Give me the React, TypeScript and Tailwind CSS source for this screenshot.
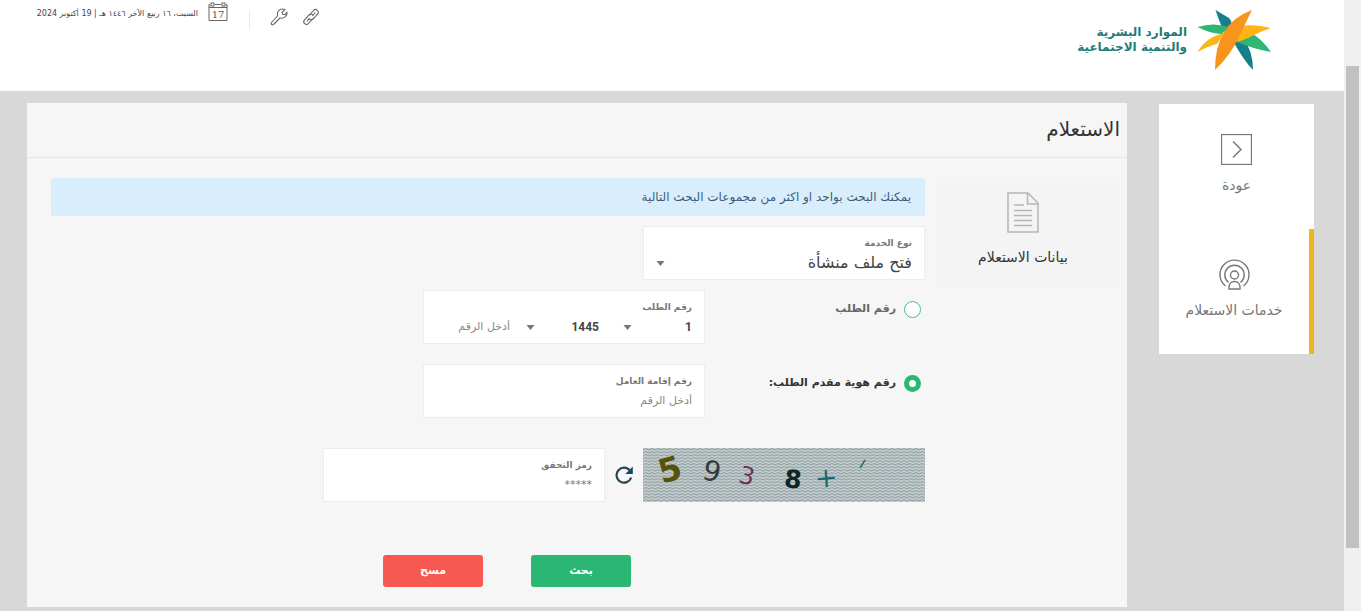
import { useState } from "react"
import type { ReactNode } from "react"

const Caret = () => (
    <svg className="pointer-events-none h-[5px] w-[9px] shrink-0" viewBox="0 0 9 5" aria-hidden="true">
        <path d="M0.500 0h8L4.500 5z" fill="#777" />
    </svg>
)

const Logo = () => (
    <svg className="h-[62px] w-[75px]" viewBox="0 0 75 62" aria-hidden="true">
        <path d="M18.500 1L32 9Q35 12 35 16L28 23Q24 18 18.500 1z" fill="#15808a" />
        <path d="M0.500 18Q17 13 31 18L25 25Q14 25 0.500 18z" fill="#2fb574" />
        <path d="M36 32L46 29Q56 42 56 61Q47 52 36 32z" fill="#15808a" />
        <path d="M38 32L54 24Q64 29 74 43Q56 40 38 32z" fill="#2fb574" />
        <path d="M0.500 43Q9 28 27 24L20 35Q11 37 0.500 43z" fill="#fdb515" />
        <path d="M35 34L44 17Q58 15 74 19Q60 24 51 29Q43 33 35 34z" fill="#fdb515" />
        <path d="M55 1Q36 8 27 23Q18 38 18 61Q33 47 42 28Q47 17 55 1z" fill="#f7941e" />
    </svg>
)

const CalendarIcon = () => (
    <svg className="h-[20px] w-[20px]" viewBox="0 0 20 20" fill="none" stroke="#666" aria-hidden="true">
        <path d="M1 5.500h18M1 4v14.500h18V4" />
        <rect x="3" y="1" width="3" height="3" />
        <rect x="14" y="1" width="3" height="3" />
        <path d="M7 2.500h6M1 4.500v-2h1M19 4.500v-2h-1" />
        <text x="10" y="16" textAnchor="middle" fontSize="10" fontFamily="DejaVu Serif, serif" fill="#555" stroke="none">17</text>
    </svg>
)

const WrenchIcon = () => (
    <svg className="h-[18px] w-[18px]" viewBox="0 0 18 18" fill="none" stroke="#666" strokeWidth="1.100" strokeLinejoin="round" aria-hidden="true">
        <path d="M1.500 14.500L7.500 8C6.500 4 9 1 12.500 1C13.500 1 14.500 1.300 15 1.700L12 4.500L13 6.500L15 6.500L17 4C17.500 8 14 11 10 10L3.500 16.500C2 17.500 0.500 16 1.500 14.500z" />
    </svg>
)

const LinkIcon = () => (
    <svg className="h-[18px] w-[18px]" viewBox="0 0 18 18" fill="none" stroke="#666" strokeWidth="1.100" aria-hidden="true">
        <g transform="rotate(-48 9 9)">
            <path d="M9 11.500H2.500a2.700 2.700 0 0 1 0-5.400H9a2.700 2.700 0 0 1 2.500 3.500" />
            <path d="M9 6.500h6.500a2.700 2.700 0 0 1 0 5.400H9a2.700 2.700 0 0 1-2.500-3.500" />
            <path d="M3 8.800h4M11 9.200h4" />
        </g>
    </svg>
)

const BackIcon = () => (
    <svg className="h-[31px] w-[31px]" viewBox="0 0 31 31" fill="none" stroke="#777" aria-hidden="true">
        <rect x="0.500" y="0.500" width="30" height="30" strokeWidth="1.300" />
        <path d="M12 7.500l8 8l-8 8" strokeWidth="1.500" />
    </svg>
)

const ServicesIcon = () => (
    <svg className="h-[31px] w-[31px]" viewBox="0 0 31 31" fill="none" stroke="#777" strokeWidth="1.400" aria-hidden="true">
        <circle cx="15.500" cy="16" r="4" />
        <path d="M10 30v-2c0-3 2-5.500 5.500-5.500S21 25 21 28v2z" />
        <path d="M9.500 23.500a9.700 9.700 0 1 1 12 0" />
        <path d="M6.500 27a14.500 14.500 0 1 1 18 0" />
    </svg>
)

const DocumentIcon = () => (
    <svg className="h-[41px] w-[32px]" viewBox="0 0 32 41" fill="none" stroke="#b5b5b5" strokeWidth="1.500" aria-hidden="true">
        <path d="M1 1h20l10 10v29H1z" />
        <path d="M20.500 1v11H31" />
        <path d="M7 13h10M7 18.500h18M7 23.500h18M7 28.500h18M7 33.500h18" />
    </svg>
)

const RefreshIcon = () => (
    <svg className="h-[18px] w-[18px]" viewBox="0 0 18 18" fill="none" aria-hidden="true">
        <path d="M15 4.500A7.500 7.500 0 1 0 16.200 11.500" stroke="#2b4754" strokeWidth="2.200" />
        <path d="M17.800 0.500v7.500h-7.500z" fill="#0f4a66" />
    </svg>
)

const Captcha = () => (
    <svg className="h-[54px] w-[282px] max-w-full [direction:ltr]" viewBox="0 0 282 54" role="img" aria-label="رمز التحقق" fontFamily="DejaVu Sans, sans-serif" textAnchor="middle">
        <defs>
            <pattern id="waves" width="6" height="3" patternUnits="userSpaceOnUse">
                <rect width="6" height="3" fill="#c3cccd" />
                <path d="M0 2L3 0.500L6 2" fill="none" stroke="#8b9b9e" />
            </pattern>
        </defs>
        <rect width="282" height="54" fill="url(#waves)" />
        <text x="27" y="33" fontSize="33" fontWeight="bold" fill="#57520a" transform="rotate(-16 27 22)">5</text>
        <text x="69" y="33" fontSize="28" fill="#333940" transform="rotate(14 69 23)">9</text>
        <text x="104" y="36" fontSize="24" fill="#663557" transform="rotate(14 104 27)">3</text>
        <text x="150" y="40" fontSize="25" fontWeight="bold" fill="#0d2726" transform="rotate(6 150 31)">8</text>
        <text x="183" y="39" fontSize="27" fill="#176a72" transform="rotate(-4 183 29)">+</text>
        <path d="M222 12L217 20" stroke="#2d6a58" strokeWidth="1.500" />
    </svg>
)

type FieldProps = { id: string; label: string; children: ReactNode }

const Field = ({ id, label, children }: FieldProps) => (
    <div className="flex h-[54px] w-[282px] max-w-full flex-col border border-[#ececec] bg-white px-3 pt-2">
        <label htmlFor={id} className="text-[9px] leading-4 font-bold text-[#777]">{label}</label>
        {children}
    </div>
)

const App = () => {
    const [tipo, setTipo] = useState("identidad")

    return (
        <div dir="rtl" className="flex min-h-screen bg-[#d8d8d8] font-['DejaVu_Sans',sans-serif] text-[#444]">

            {/* Scroll track */}
            <div className="w-[17px] shrink-0 bg-[#f0f0f0] px-[2px] pt-[66px]">
                <div className="h-[482px] bg-[#c1c1c1]"></div>
            </div>

            <div className="min-w-0 grow">
                <header className="flex h-[91px] items-start justify-between bg-white pr-[72px] pl-[30px]">
                    <a href="#" className="flex items-center gap-[10px] pt-[9px]">
                        <Logo />
                        <span className="text-[12px] leading-[15px] font-bold text-[#1f7d78]">
                            الموارد البشرية<br />والتنمية الاجتماعية
                        </span>
                    </a>
                    <div className="flex items-start pt-[2px]">
                        <a href="#" aria-label="روابط" className="mt-[6px]"><LinkIcon /></a>
                        <a href="#" aria-label="أدوات" className="mt-[6px] mr-[14px]"><WrenchIcon /></a>
                        <div className="mt-2 mr-5 h-5 w-px bg-[#ececec]"></div>
                        <div className="mr-[21px] flex items-end gap-[10px]">
                            <CalendarIcon />
                            <span className="min-w-[168px] text-[8px] leading-4 text-[#444]">السبت، ١٦ ربيع الآخر ١٤٤٦ هـ | 19 أكتوبر 2024</span>
                        </div>
                    </div>
                </header>

                <div className="flex items-start gap-8 pt-3 pr-[30px] pb-1 pl-[27px]">

                    {/* Side menu */}
                    <nav className="mt-px w-[155px] shrink-0 bg-white text-[14px] text-[#777]">
                        <a href="#" className="flex h-[125px] flex-col items-center gap-3 pt-[30px]">
                            <BackIcon />
                            <span className="leading-4">عودة</span>
                        </a>
                        <a href="#" className="flex h-[125px] flex-col items-center gap-3 border-r-[5px] border-[#f0b41c] pt-[30px]">
                            <ServicesIcon />
                            <span className="leading-4">خدمات الاستعلام</span>
                        </a>
                    </nav>

                    <main className="min-w-0 grow bg-[#f6f6f6]">
                        <h1 className="border-b border-[#e6e6e6] px-[7px] pt-3 pb-[14px] text-[20px] leading-7 text-[#333]">الاستعلام</h1>

                        <div className="flex items-start gap-[11px] pt-5 pr-[7px] pb-5 pl-6">
                            <section className="flex h-[110px] w-[184px] shrink-0 flex-col items-center gap-3 bg-[#f4f4f4] pt-[14px] pr-[10px]">
                                <DocumentIcon />
                                <h2 className="text-[14px] leading-6 text-[#333]">بيانات الاستعلام</h2>
                            </section>

                            <form className="min-w-0 grow" onSubmit={(e) => e.preventDefault()}>
                                <p className="rounded-xs bg-[#d9eefc] px-[14px] py-2 text-[12px] leading-[22px] text-[#3d5c78]">
                                    يمكنك البحث بواحد او اكثر من مجموعات البحث التالية
                                </p>

                                <div className="mt-[10px]">
                                    <Field id="servicio" label="نوع الخدمة">
                                        <div className="flex items-center justify-between">
                                            <select id="servicio" className="grow appearance-none bg-transparent text-[16px] leading-6 text-[#444] outline-none">
                                                <option>فتح ملف منشأة</option>
                                            </select>
                                            <Caret />
                                        </div>
                                    </Field>
                                </div>

                                {/* Request number */}
                                <div className="mt-[10px] flex items-start">
                                    <label className="flex w-[220px] shrink-0 items-center gap-2 pt-[10px] pr-1 text-[11px] leading-[18px] font-bold text-[#666]">
                                        <input
                                            type="radio"
                                            name="tipo"
                                            className="h-[17px] w-[17px] appearance-none rounded-full border border-[#4fb58a] bg-white checked:border-[5px] checked:border-[#2cb673]"
                                            checked={tipo === "solicitud"}
                                            onChange={() => setTipo("solicitud")}
                                        />
                                        رقم الطلب
                                    </label>
                                    <Field id="numero" label="رقم الطلب">
                                        <div className="flex items-center text-[11px]">
                                            <select aria-label="رقم المكتب" className="w-[60px] appearance-none bg-transparent font-['Roboto','DejaVu_Sans',sans-serif] text-[12px] leading-6 font-bold text-[#444] outline-none">
                                                <option>1</option>
                                            </select>
                                            <Caret />
                                            <select aria-label="السنة" className="mr-6 w-16 appearance-none bg-transparent font-['Roboto','DejaVu_Sans',sans-serif] text-[12px] leading-6 font-bold text-[#444] outline-none">
                                                <option>1445</option>
                                            </select>
                                            <Caret />
                                            <input id="numero" type="text" placeholder="أدخل الرقم" className="mr-4 w-0 grow bg-transparent leading-6 outline-none placeholder:text-[#888]" />
                                        </div>
                                    </Field>
                                </div>

                                {/* Applicant identity */}
                                <div className="mt-5 flex items-start">
                                    <label className="flex w-[220px] shrink-0 items-center gap-2 pt-[10px] pr-1 text-[11px] leading-[18px] font-bold text-[#333]">
                                        <input
                                            type="radio"
                                            name="tipo"
                                            className="h-[17px] w-[17px] appearance-none rounded-full border border-[#4fb58a] bg-white checked:border-[5px] checked:border-[#2cb673]"
                                            checked={tipo === "identidad"}
                                            onChange={() => setTipo("identidad")}
                                        />
                                        رقم هوية مقدم الطلب:
                                    </label>
                                    <Field id="iqama" label="رقم إقامة العامل">
                                        <input id="iqama" type="text" placeholder="أدخل الرقم" className="bg-transparent text-[11px] leading-6 outline-none placeholder:text-[#888]" />
                                    </Field>
                                </div>

                                <div className="mt-[30px] flex items-center gap-[10px]">
                                    <Captcha />
                                    <button type="button" aria-label="تحديث"><RefreshIcon /></button>
                                    <Field id="codigo" label="رمز التحقق">
                                        <input id="codigo" type="text" placeholder="*****" className="bg-transparent text-[11px] leading-6 outline-none placeholder:text-[#777]" />
                                    </Field>
                                </div>

                                <div className="mt-[53px] flex gap-12 pr-[294px] text-[11px] font-bold text-white">
                                    <button type="submit" className="h-8 w-[100px] rounded-[3px] bg-[#2cb673]">بحث</button>
                                    <button type="reset" className="h-8 w-[100px] rounded-[3px] bg-[#f65852]">مسح</button>
                                </div>
                            </form>
                        </div>
                    </main>
                </div>
            </div>
        </div>
    )
}

export default App
